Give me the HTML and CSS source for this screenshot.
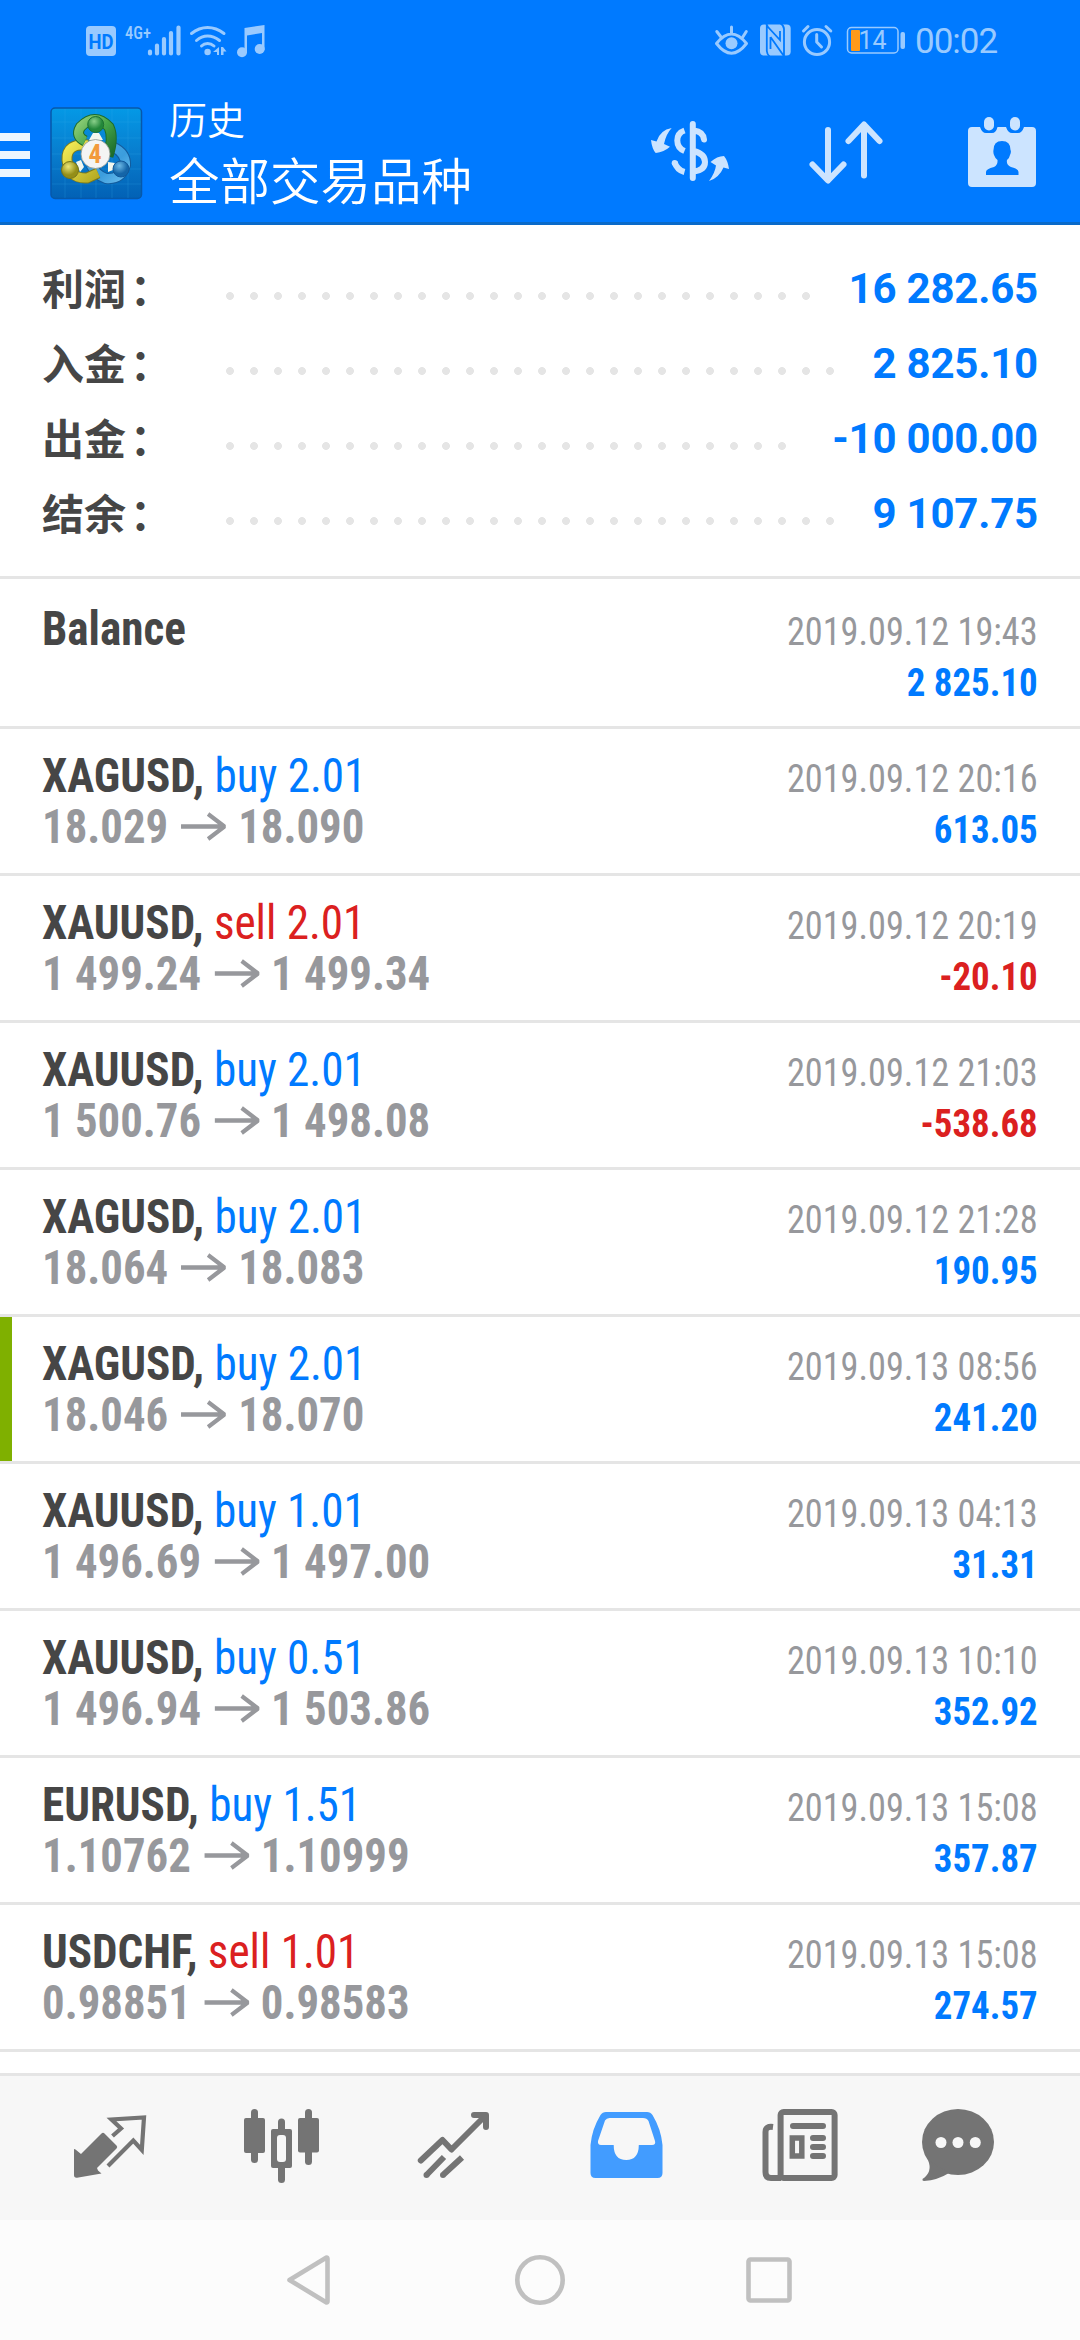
FILE: index.html
```html
<!DOCTYPE html>
<html lang="zh-CN">
<head>
<meta charset="utf-8">
<title>历史</title>
<link rel="stylesheet" href="styles.css">
</head>
<body>
<div class="screen">
  <header class="top">
    <div class="status">
      <svg class="status-left" width="300" height="80" viewBox="0 0 300 80">
        <rect x="86" y="26" width="30" height="30" rx="4" class="s-fill"/>
        <text x="101" y="48.5" class="hd" textLength="25" lengthAdjust="spacingAndGlyphs">HD</text>
        <text x="125" y="38.5" class="net" textLength="26" lengthAdjust="spacingAndGlyphs">4G+</text>
        <path class="s-line bars" d="M150 51.5v2M157 45.5v8M164 39v14.500M171 33v20.500M178.500 27.500v26"/>
        <path class="s-line w3" d="M191.500 33.500Q199 27.500 207.600 27.500T224 33.500M196.500 40.500Q201.500 36 207.600 36T219.500 40.500M201.500 46Q204 43.500 207.600 43.500T214 46"/>
        <circle cx="207.600" cy="52" r="3.200" class="s-fill"/>
        <path class="s-fill" d="M219 47v8h-2v-3h-4zM221 47h2l3.500 4.500h-3V55h-2.500z"/>
        <path class="s-fill" d="M244.500 28L264.500 25V50H262V33L247 35.500V53H244.500z"/>
        <circle cx="242" cy="52.300" r="5" class="s-fill"/><circle cx="259.700" cy="49" r="5" class="s-fill"/>
      </svg>
      <div class="status-right">
        <svg width="206" height="80" viewBox="705 0 206 80">
          <path class="s-line w3" d="M716.500 43.500Q731.500 24.500 746.500 43.500Q731.500 63 716.500 43.500zM716.800 31.500L721 37M731.500 27V33M746.300 31.500L742.800 37"/>
          <circle cx="731.500" cy="43.300" r="6" class="s-fill"/>
          <rect x="760" y="24.500" width="30.700" height="31" rx="4" class="s-fill"/>
          <path class="n-gap" d="M766.200 24L768 27L780 40V31M766.800 24V51Q767 54 769.500 56.500M770.500 37V49M770.500 37L783.500 55.500M780.500 23.500Q784 25.500 784 29V56"/>
          <circle cx="817" cy="42" r="12.600" class="s-line w3"/>
          <path class="s-line w3" d="M816.700 34.500V42L821.500 47M803.500 31L808 26.500M826 26.500L830.800 31"/>
          <rect x="847.500" y="27.500" width="50.500" height="25.500" rx="4" class="s-line w1"/>
          <rect x="851" y="30" width="9" height="21" rx="1" class="charge"/>
          <rect x="900.500" y="32" width="4.500" height="17" rx="2" class="s-fill"/>
          <text x="858.500" y="49.300" class="pct">14</text>
        </svg>
        <span class="time">00:02</span>
      </div>
    </div>
    <div class="bar">
      <svg width="48" height="142" viewBox="0 80 48 142"><path class="burger" d="M0 133h30v8H0zM0 151h30v8H0zM0 169h30v8H0z"/></svg>
      <svg width="96" height="142" viewBox="48 80 96 142">
        <defs>
          <linearGradient id="tile" x1="0" y1="0" x2="0" y2="1"><stop offset="0" stop-color="#0499e6"/><stop offset=".5" stop-color="#087dce"/><stop offset="1" stop-color="#0261b5"/></linearGradient>
          <linearGradient id="grn" x1="0" y1="0" x2="1" y2="1"><stop offset="0" stop-color="#8fce78"/><stop offset=".5" stop-color="#45a548"/><stop offset="1" stop-color="#1c6c2c"/></linearGradient>
          <linearGradient id="yel" x1="0" y1="0" x2="1" y2="1"><stop offset="0" stop-color="#f2ea55"/><stop offset="1" stop-color="#b5aa22"/></linearGradient>
          <linearGradient id="blu" x1="0" y1="0" x2="1" y2="1"><stop offset="0" stop-color="#4ba8e2"/><stop offset=".6" stop-color="#3b9ddd"/><stop offset="1" stop-color="#67baec"/></linearGradient>
          <radialGradient id="gb" cx=".4" cy=".3"><stop offset="0" stop-color="#8ad08a"/><stop offset="1" stop-color="#23873a"/></radialGradient>
          <radialGradient id="yb" cx=".4" cy=".3"><stop offset="0" stop-color="#ece779"/><stop offset="1" stop-color="#948e18"/></radialGradient>
          <radialGradient id="bb" cx=".4" cy=".3"><stop offset="0" stop-color="#6db9e6"/><stop offset="1" stop-color="#1465a8"/></radialGradient>
        </defs>
        <rect x="51" y="108" width="90.500" height="90.500" rx="4" fill="url(#tile)" stroke="#0758a9" stroke-width="1.500"/>
        <path class="grid" d="M65 109v89M81 109v89M96 109v89M112 109v89M128 109v89M52 122h89M52 138h89M52 154h89M52 169h89M52 184h89"/>
        <path d="M113 147Q126 153 125.500 165Q121 180 106 178.500Q96 175 91 165" class="ring edge-b"/><path d="M113 147Q126 153 125.500 165Q121 180 106 178.500Q96 175 91 165" class="ring" stroke="url(#blu)"/>
        <path d="M88 145Q66 143 67 160Q69 179 87 178L98 173" class="ring edge-y"/><path d="M88 145Q66 143 67 160Q69 179 87 178L98 173" class="ring" stroke="url(#yel)"/>
        <path d="M85 141Q75 136 80.500 127Q95 112 109 127Q114 138 108 156" class="ring edge-g"/><path d="M85 141Q75 136 80.500 127Q95 112 109 127Q114 138 108 156" class="ring" stroke="url(#grn)"/>
        <path class="glint" d="M89 140l4-7h6l4 7zM76 162l5-2 3 7-4 5zM108 162l7 1-2 7-5 2z"/>
        <circle cx="95.700" cy="124.500" r="8" fill="url(#gb)" stroke="#1d7233"/>
        <circle cx="70" cy="170" r="8.500" fill="url(#yb)" stroke="#777519"/>
        <circle cx="121" cy="169" r="8" fill="url(#bb)" stroke="#12599a"/>
        <circle cx="95.500" cy="154" r="14.500" fill="#f4f4f4" stroke="#8a958e" stroke-width=".8"/>
        <text x="95" y="163" class="four">4</text>
      </svg>
      <div class="titles"><div class="section">历史</div><div class="filter">全部交易品种</div></div>
      <div class="actions">
        <svg width="156" height="142" viewBox="612 80 156 142">
          <path class="a-fill" d="M671.700 128Q660 130 656.500 141.500L651 140Q652 149 655.700 153Q664 152 670 146.700L664 144Q666 134 671.700 128zM709 181Q715 173 716 165.500L710.500 162Q717 156 724 156Q728 161 729 169L723.500 167.500Q719 178 709 181z"/>
          <path class="a-line butt" d="M684.500 130.500Q677.300 133 677.300 140.500T684.500 151M684.500 172Q677 170 674.500 162"/>
          <circle cx="674.700" cy="163" r="3" class="a-fill"/>
          <path class="a-line" d="M692.800 124V178M694 130.500Q703 131.500 704 139.500M694 151Q705 154 705 162T694 171.500"/>
        </svg>
        <svg width="156" height="142" viewBox="768 80 156 142">
          <path class="a-line" d="M828 130V180M812.500 164.500L828 180.500L843.500 164.500M864 175.500V125M848.500 141L864 124.500L879.500 141"/>
        </svg>
        <svg width="156" height="142" viewBox="924 80 156 142">
          <path class="a-fill" fill-rule="evenodd" d="M972 127H980Q982 133 986 133H992Q996 133 997.500 127H1006Q1008 133 1012 133H1018Q1022 133 1024 127H1032Q1036 127 1036 131V183Q1036 187 1032 187H972Q968 187 968 183V131Q968 127 972 127zM1002 141Q993.500 141 993.500 150Q993 152 994 155Q995 158 997.500 160Q998 165 994 167Q986 169 986 172V175H1018.500V172Q1018.500 169 1011 167Q1006 165 1007 160Q1009.500 158 1010 155Q1011.500 152 1010.500 150Q1010.500 141 1002 141z"/>
          <rect x="984" y="117" width="10" height="13.500" rx="5" class="a-fill"/><rect x="1010" y="117" width="10" height="13.500" rx="5" class="a-fill"/>
        </svg>
      </div>
    </div>
  </header>

  <section class="summary">
    <div class="sum-row"><span class="sum-label">利润<span class="colon">：</span></span><span class="dots"></span><span class="sum-value">16 282.65</span></div>
    <div class="sum-row"><span class="sum-label">入金<span class="colon">：</span></span><span class="dots"></span><span class="sum-value">2 825.10</span></div>
    <div class="sum-row"><span class="sum-label">出金<span class="colon">：</span></span><span class="dots"></span><span class="sum-value">-10 000.00</span></div>
    <div class="sum-row"><span class="sum-label">结余<span class="colon">：</span></span><span class="dots"></span><span class="sum-value">9 107.75</span></div>
  </section>

  <svg class="defs"><symbol id="arrow" viewBox="0 0 48 36"><path class="arrow-line" d="M0 19.500H46M29 7L46.500 19.500L29 32"/></symbol></svg>

  <main class="list">
    <div class="deal balance"><div class="left"><div class="line"><b>Balance</b></div></div><div class="right"><div class="date">2019.09.12 19:43</div><div class="profit">2 825.10</div></div></div>
    <div class="deal"><div class="left"><div class="line"><b>XAGUSD,</b> <span class="buy">buy 2.01</span></div><div class="line prices">18.029<svg class="arrow"><use href="#arrow"/></svg>18.090</div></div><div class="right"><div class="date">2019.09.12 20:16</div><div class="profit">613.05</div></div></div>
    <div class="deal"><div class="left"><div class="line"><b>XAUUSD,</b> <span class="sell">sell 2.01</span></div><div class="line prices">1 499.24<svg class="arrow"><use href="#arrow"/></svg>1 499.34</div></div><div class="right"><div class="date">2019.09.12 20:19</div><div class="profit loss">-20.10</div></div></div>
    <div class="deal"><div class="left"><div class="line"><b>XAUUSD,</b> <span class="buy">buy 2.01</span></div><div class="line prices">1 500.76<svg class="arrow"><use href="#arrow"/></svg>1 498.08</div></div><div class="right"><div class="date">2019.09.12 21:03</div><div class="profit loss">-538.68</div></div></div>
    <div class="deal"><div class="left"><div class="line"><b>XAGUSD,</b> <span class="buy">buy 2.01</span></div><div class="line prices">18.064<svg class="arrow"><use href="#arrow"/></svg>18.083</div></div><div class="right"><div class="date">2019.09.12 21:28</div><div class="profit">190.95</div></div></div>
    <div class="deal marked"><div class="left"><div class="line"><b>XAGUSD,</b> <span class="buy">buy 2.01</span></div><div class="line prices">18.046<svg class="arrow"><use href="#arrow"/></svg>18.070</div></div><div class="right"><div class="date">2019.09.13 08:56</div><div class="profit">241.20</div></div></div>
    <div class="deal"><div class="left"><div class="line"><b>XAUUSD,</b> <span class="buy">buy 1.01</span></div><div class="line prices">1 496.69<svg class="arrow"><use href="#arrow"/></svg>1 497.00</div></div><div class="right"><div class="date">2019.09.13 04:13</div><div class="profit">31.31</div></div></div>
    <div class="deal"><div class="left"><div class="line"><b>XAUUSD,</b> <span class="buy">buy 0.51</span></div><div class="line prices">1 496.94<svg class="arrow"><use href="#arrow"/></svg>1 503.86</div></div><div class="right"><div class="date">2019.09.13 10:10</div><div class="profit">352.92</div></div></div>
    <div class="deal"><div class="left"><div class="line"><b>EURUSD,</b> <span class="buy">buy 1.51</span></div><div class="line prices">1.10762<svg class="arrow"><use href="#arrow"/></svg>1.10999</div></div><div class="right"><div class="date">2019.09.13 15:08</div><div class="profit">357.87</div></div></div>
    <div class="deal"><div class="left"><div class="line"><b>USDCHF,</b> <span class="sell">sell 1.01</span></div><div class="line prices">0.98851<svg class="arrow"><use href="#arrow"/></svg>0.98583</div></div><div class="right"><div class="date">2019.09.13 15:08</div><div class="profit">274.57</div></div></div>
  </main>

  <nav class="tabs">
    <svg width="172" height="144" viewBox="24 2076 172 144">
      <path class="t-fill" d="M74 2149L75.500 2149.500L81 2154L101.500 2133.500Q103 2132 104.500 2133.500L116.500 2145.500Q118 2147 116.500 2148.500L97 2168L98 2170.500L101.500 2173.500L77 2177.700Q74 2178 74 2175z"/>
      <path class="t-line w4" stroke-linejoin="miter" d="M112.500 2136L121 2128.500L111.500 2119.500L144 2117.500L141.800 2150L133.300 2140.500L108 2166"/>
    </svg>
    <svg width="172" height="144" viewBox="196 2076 172 144">
      <rect x="251" y="2109" width="7" height="54" rx="3.500" class="t-fill"/><rect x="244" y="2118" width="21" height="35" rx="2" class="t-fill"/>
      <rect x="278" y="2118.500" width="7" height="64.500" rx="3.500" class="t-fill"/><rect x="271" y="2129" width="21" height="39" rx="2" class="t-fill"/><rect x="277" y="2135" width="9" height="27" rx="3" class="hole"/>
      <rect x="305" y="2109" width="7" height="56" rx="3.500" class="t-fill"/><rect x="298" y="2118" width="21" height="34.500" rx="2" class="t-fill"/>
    </svg>
    <svg width="172" height="144" viewBox="368 2076 172 144">
      <path class="t-line round" d="M420.800 2160.500L442.500 2140L451.500 2149.500L485 2116M474 2115H486V2127"/>
      <path class="t-line" d="M444 2157L427 2174.500M462 2157.500L443.500 2174.500"/>
      <circle cx="426.500" cy="2175" r="3" class="t-fill"/><circle cx="443" cy="2175" r="3" class="t-fill"/>
    </svg>
    <svg width="172" height="144" viewBox="540 2076 172 144">
      <path class="active" fill-rule="evenodd" d="M606 2112H647Q650.500 2112 652.500 2115Q661 2129 662.500 2145V2173Q662.500 2178 657.500 2178H595.500Q590.500 2178 590.500 2173V2145Q592 2129 600.500 2115Q602.500 2112 606 2112zM609.500 2118Q606.500 2118 605 2120.500L598 2141Q597.500 2145 601 2145H613.700Q613.700 2160 626.200 2160T638.800 2145H652Q656 2145 655 2141L648.500 2121Q647 2118 643 2118z"/>
    </svg>
    <svg width="172" height="144" viewBox="712 2076 172 144">
      <rect x="780.600" y="2112" width="54" height="66" rx="3" class="t-line"/>
      <path class="t-line" d="M773 2127Q765.500 2126 765.500 2132V2172Q765.500 2178 771 2178H781"/>
      <path class="t-line round" d="M793 2126H823M813 2138H823M813 2147H823M813 2156H823"/>
      <rect x="792.300" y="2138" width="9.500" height="18" class="t-line w55"/>
    </svg>
    <svg width="172" height="144" viewBox="884 2076 172 144">
      <ellipse cx="958" cy="2142" rx="36" ry="33" class="t-fill"/>
      <path class="t-fill" d="M928 2160Q933 2172 922.500 2179Q922 2181 924 2181Q938 2180 949 2173z"/>
      <circle cx="941" cy="2142.500" r="5.500" class="hole"/><circle cx="958" cy="2142.500" r="5.500" class="hole"/><circle cx="975.300" cy="2142.500" r="5.500" class="hole"/>
    </svg>
  </nav>

  <footer class="sysnav">
    <svg width="230" height="120" viewBox="195 2220 230 120"><path class="n-line" d="M289.500 2280L326.500 2257.500Q327.500 2257.500 327.500 2259V2301Q327.500 2302.500 326.500 2302.500z"/></svg>
    <svg width="230" height="120" viewBox="425 2220 230 120"><circle cx="540" cy="2280" r="22.700" class="n-line"/></svg>
    <svg width="230" height="120" viewBox="655 2220 230 120"><rect x="748.500" y="2259.500" width="41" height="41" rx="2" class="n-line"/></svg>
  </footer>
</div>
</body>
</html>
```
FILE: styles.css
```css
* { box-sizing: border-box; }
body { margin: 0; background: #fff; font-family: Roboto, "Noto Sans CJK SC", sans-serif; }
svg { display: block; flex: none; }
.screen { width: 1080px; height: 2340px; display: flex; flex-direction: column; overflow: hidden; }

.top { height: 225px; background: #007aff; border-bottom: 3px solid #0a6ac9; }
.status { height: 80px; display: flex; justify-content: space-between; }
.status-right { display: flex; padding-right: 81px; gap: 4px; }
.time { font-size: 35px; line-height: 83px; color: #99caff; width: 84px; white-space: nowrap; letter-spacing: -1px; }
.s-fill { fill: #99caff; }
.s-line { fill: none; stroke: #99caff; stroke-linecap: round; stroke-linejoin: round; }
.w3 { stroke-width: 3; }
.w1 { stroke-width: 1.5; }
.bars { stroke-width: 4.2; }
.n-gap { fill: none; stroke: #007aff; stroke-width: 1.8; }
.charge { fill: #ff9a1a; }
.hd { font: 700 20px Roboto; fill: #007aff; text-anchor: middle; }
.net { font: 500 18px "Roboto Condensed"; fill: #99caff; }
.pct { font: 400 25px Roboto; fill: #99caff; }

.bar { height: 142px; display: flex; }
.burger { fill: #edf6ff; }
.grid { fill: none; stroke: #39b0ef; stroke-opacity: .22; stroke-width: 1; }
.ring { fill: none; stroke-width: 9; }
.edge-g { stroke: #1d6b2c; stroke-width: 11; }
.edge-y { stroke: #7c7a1c; stroke-width: 11; }
.edge-b { stroke: #135b9c; stroke-width: 11; }
.glint { fill: #f2f7ee; }
.four { font: 700 26px "Roboto Condensed"; fill: #f29a3c; text-anchor: middle; }
.titles { margin-left: 25px; padding-top: 15px; color: #fff; font-weight: 350; font-family: "Noto Sans CJK SC", sans-serif; white-space: nowrap; }
.section { font-size: 38px; line-height: 45px; }
.filter { font-size: 50.5px; line-height: 76px; }
.actions { margin-left: auto; display: flex; }
.a-fill { fill: #cce4ff; }
.a-line { fill: none; stroke: #cce4ff; stroke-width: 6; stroke-linecap: round; stroke-linejoin: round; }
.butt { stroke-linecap: butt; }

.summary { height: 354px; padding: 26px 42px 0; border-bottom: 3px solid #e5e5e5; }
.sum-row { height: 75px; display: flex; font-size: 42px; font-weight: 700; line-height: 75px; }
.sum-label { width: 176px; color: #464646; white-space: nowrap; font-family: "Noto Sans CJK SC", sans-serif; line-height: 71px; }
.colon { margin-left: 4px; }
.dots { flex: 1; margin-right: 24px; height: 8px; margin-top: 41px; }
.dots::before { content: ""; display: block; height: 8px; width: round(down, 100%, 24px); background: radial-gradient(circle at 12px 4px, #e5e5e5 3.6px, transparent 4.2px) 0 0 / 24px 8px; }
.sum-value { color: #007aff; white-space: pre; letter-spacing: -.2px; }

.defs { width: 0; height: 0; }
.list { flex: 1; }
.deal { height: 147px; padding: 21px 42px 0; border-bottom: 3px solid #e5e5e5; display: flex; justify-content: space-between; font-family: "Roboto Condensed", sans-serif; }
.balance { height: 150px; padding-top: 24px; }
.marked { background: linear-gradient(#7fb000, #7fb000) 0 0 / 12px 144px no-repeat; }
.line { font-size: 48px; line-height: 51px; height: 51px; white-space: pre; color: #464646; transform: scaleX(.94); transform-origin: 0 0; }
.buy { color: #007aff; }
.sell { color: #db2020; }
.prices { display: flex; color: #97989c; font-weight: 700; transform: scaleX(.933); }
.arrow { width: 48px; height: 36px; margin: 6px 13px 0 14px; }
.arrow-line { fill: none; stroke: #97989c; stroke-width: 4.5; }
.right { padding-top: 4px; text-align: right; font-size: 39px; line-height: 51px; white-space: pre; }
.date { color: #97989c; transform: scaleX(.93); transform-origin: 100% 0; }
.profit { color: #007aff; font-weight: 700; transform: scaleX(.945); transform-origin: 100% 0; }
.loss { color: #db2020; }

.tabs { height: 147px; border-top: 3px solid #e5e5e5; background: #f7f7f7; display: flex; padding-left: 24px; }
.t-fill { fill: #747474; }
.t-line { fill: none; stroke: #747474; stroke-width: 6; }
.w4 { stroke-width: 4.2; }
.w55 { stroke-width: 5.5; }
.round { stroke-linecap: round; stroke-linejoin: round; }
.hole { fill: #f7f7f7; }
.active { fill: #429cff; }

.sysnav { height: 120px; background: #fcfcfc; display: flex; padding-left: 195px; }
.n-line { fill: none; stroke: #c0c0c0; stroke-width: 4.6; stroke-linejoin: round; }
```
